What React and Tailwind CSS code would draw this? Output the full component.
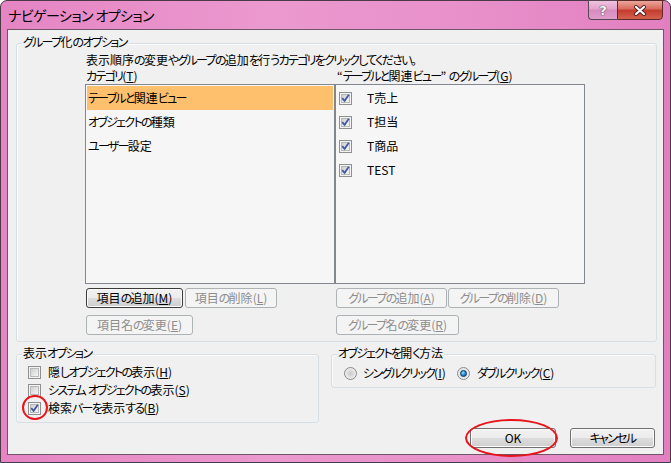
import React from "react";

const F = "font-['Noto_Sans_CJK_JP','Noto_Sans',sans-serif] [font-feature-settings:'palt']";

function J({ t, k }) {
  const parts = t.split(/([\u3040-\u30ff]+)/);
  return (
    <>
      {parts.map((p, i) =>
        /[\u3040-\u30ff]/.test(p) ? (
          <span key={i} className="tracking-[-1.7px]">{p}</span>
        ) : (
          <React.Fragment key={i}>{p}</React.Fragment>
        )
      )}
      {k && (
        <>
          (<u>{k}</u>)
        </>
      )}
    </>
  );
}

function Check({ checked }) {
  return (
    <div className="w-[13px] h-[13px] shrink-0 border border-[#8e8f8f] bg-[#f4f4f4] p-[1px]">
      <div className="relative w-full h-full border border-[#b9b9b9] bg-[linear-gradient(135deg,#cfcfcf,#f6f6f6)]">
        {checked && (
          <svg className="absolute -left-[1px] -top-[1px]" width="9" height="9" viewBox="0 0 9 9">
            <path d="M1.2 4.2 L3.6 6.8 L7.8 0.8" stroke="#3f55a3" strokeWidth="1.7" fill="none" />
          </svg>
        )}
      </div>
    </div>
  );
}

function Radio({ checked }) {
  return (
    <div className="w-[13px] h-[13px] shrink-0 rounded-full border border-[#8b8b8b] bg-[radial-gradient(circle_at_50%_50%,#c9c9c9_0%,#e6e6e6_55%,#f6f6f6_100%)] flex items-center justify-center">
      {checked && (
        <div className="w-[7px] h-[7px] rounded-full border border-[#0c3a66] bg-[radial-gradient(circle_at_40%_35%,#9fe0ff_0%,#1e8ad6_50%,#0b4d8c_100%)]" />
      )}
    </div>
  );
}

function Btn({ children, w, disabled, dark }) {
  if (disabled) {
    return (
      <div
        className={`${w} h-[20px] shrink-0 rounded-[3px] border border-[#adb2b5] bg-[#f4f4f4] flex items-center justify-center whitespace-nowrap text-[12px] leading-[16px] text-[#8d8d8d]`}
      >
        {children}
      </div>
    );
  }
  return (
    <div
      className={`${w} h-[20px] shrink-0 rounded-[3px] border ${dark ? "border-[#3c3c3c]" : "border-[#707070]"} bg-[linear-gradient(to_bottom,#f2f2f2_0%,#ebebeb_50%,#dddddd_50%,#cfcfcf_100%)] shadow-[inset_0_0_0_1px_#fbfbfb] flex items-center justify-center whitespace-nowrap text-[12px] leading-[16px] text-black`}
    >
      {children}
    </div>
  );
}

export default function App() {
  return (
    <div className={`w-[671px] h-[463px] ${F} text-black`}>
      <div className="w-[671px] h-[463px] rounded-t-[7px] border border-[#4a3946] bg-[linear-gradient(to_right,#e585c3,#eb99cf_40%,#e890ca_70%,#e27fc0)] flex flex-col px-[6px] pb-[7px]">
        {/* title bar */}
        <div className="h-[28px] flex items-start justify-between shrink-0">
          <div className="ml-[1px] mt-[5px] text-[14px] leading-[18px] tracking-[-0.6px] text-black whitespace-nowrap">ナビゲーション オプション</div>
          <div className="flex -mt-[1px] mr-[1px]">
            <div className="w-[29px] h-[20px] rounded-bl-[4px] border border-[#5a4555] border-r-0 bg-[linear-gradient(to_bottom,#efc3df_0%,#e3a2cc_45%,#d68ac0_50%,#df9dca_100%)] flex items-center justify-center">
              <span className="font-['DejaVu_Sans',sans-serif] font-bold text-[13px] leading-[13px] text-white [text-shadow:0_0_1px_#333,0_0_1px_#333]">?</span>
            </div>
            <div className="w-[46px] h-[20px] rounded-br-[4px] border border-[#5a2a28] bg-[linear-gradient(to_bottom,#eba79c_0%,#d96a5b_45%,#c43b2c_50%,#d4604e_100%)] flex items-center justify-center">
              <svg width="14" height="11" viewBox="0 0 14 11">
                <path d="M3 2 L11 9 M11 2 L3 9" stroke="#4a2020" strokeWidth="4" strokeLinecap="round" />
                <path d="M3 2 L11 9 M11 2 L3 9" stroke="#ffffff" strokeWidth="2.2" strokeLinecap="round" />
              </svg>
            </div>
          </div>
        </div>

        {/* client */}
        <div className="flex-1 border border-[#6f5566] bg-[#f0f0f0] flex flex-col whitespace-nowrap">
          {/* group 1 */}
          <div className="relative mt-[13px] ml-[8px] w-[641px] rounded-[3px] border border-[#d5dfe5] shadow-[inset_1px_1px_0_#fbfbfb] pl-[68px] pt-[8px] pb-[6px]">
            <div className="absolute -top-[10px] left-[5px] px-[1px] bg-[#f0f0f0] text-[12px] leading-[16px]"><J t="グループ化のオプション" /></div>
            <div className="ml-[1px] text-[12px] leading-[16px]"><J t="表示順序の変更やグループの追加を行うカテゴリをクリックしてください。" /></div>
            <div className="flex text-[12px] leading-[16px]">
              <div className="w-[250px] pl-[1px]"><J t="カテゴリ" k="T" /></div>
              <div className="w-[250px] pl-[2px]"><J t="“テーブルと関連ビュー” のグループ" k="G" /></div>
            </div>
            <div className="flex">
              <div className="w-[250px] h-[200px] border border-[#828790] bg-[#f6f6f6] p-[1px] text-[12px] leading-[16px]">
                <div className="h-[24px] bg-[#ffc06e] flex items-center pl-[1px]"><J t="テーブルと関連ビュー" /></div>
                <div className="h-[24px] flex items-center pl-[1px]"><J t="オブジェクトの種類" /></div>
                <div className="h-[24px] flex items-center pl-[1px]"><J t="ユーザー設定" /></div>
              </div>
              <div className="w-[250px] h-[200px] border border-[#828790] bg-[#f6f6f6] pt-[1px] pl-[3px] text-[12px] leading-[16px]">
                {["T売上", "T担当", "T商品", "TEST"].map((t) => (
                  <div key={t} className="h-[24px] flex items-center">
                    <Check checked />
                    <span className="ml-[15px]">{t}</span>
                  </div>
                ))}
              </div>
            </div>
            <div className="flex mt-[4px]">
              <div className="w-[250px] pl-[1px] flex gap-[2px]">
                <Btn w="w-[97px]" dark><J t="項目の追加" k="M" /></Btn>
                <Btn w="w-[92px]" disabled><J t="項目の削除" k="L" /></Btn>
              </div>
              <div className="w-[250px] pl-[1px] flex gap-[1px]">
                <Btn w="w-[111px]" disabled><J t="グループの追加" k="A" /></Btn>
                <Btn w="w-[111px]" disabled><J t="グループの削除" k="D" /></Btn>
              </div>
            </div>
            <div className="flex mt-[7px]">
              <div className="w-[250px] pl-[1px] flex">
                <Btn w="w-[107px]" disabled><J t="項目名の変更" k="E" /></Btn>
              </div>
              <div className="w-[250px] pl-[1px] flex">
                <Btn w="w-[123px]" disabled><J t="グループ名の変更" k="R" /></Btn>
              </div>
            </div>
          </div>

          {/* groups 2 & 3 */}
          <div className="flex items-start mt-[12px] ml-[8px] gap-[12px]">
            <div className="relative w-[303px] rounded-[3px] border border-[#d5dfe5] shadow-[inset_1px_1px_0_#fbfbfb] pl-[11px] pt-[8px] pb-[5px] text-[12px] leading-[16px]">
              <div className="absolute -top-[10px] left-[5px] px-[1px] bg-[#f0f0f0]"><J t="表示オプション" /></div>
              <div className="h-[18px] flex items-center">
                <Check />
                <span className="ml-[7px]"><J t="隠しオブジェクトの表示" k="H" /></span>
              </div>
              <div className="h-[18px] flex items-center">
                <Check />
                <span className="ml-[7px]"><J t="システム オブジェクトの表示" k="S" /></span>
              </div>
              <div className="h-[18px] flex items-center">
                <div className="relative">
                  <Check checked />
                  <div className="absolute -left-[6px] -top-[7px] w-[26px] h-[25px] rounded-full border-2 border-[#e8141c]" />
                </div>
                <span className="ml-[7px]"><J t="検索バーを表示する" k="B" /></span>
              </div>
            </div>
            <div className="relative w-[325px] rounded-[3px] border border-[#d5dfe5] shadow-[inset_1px_1px_0_#fbfbfb] pl-[12px] pt-[9px] pb-[5px] text-[12px] leading-[16px]">
              <div className="absolute -top-[10px] left-[5px] px-[1px] bg-[#f0f0f0]"><J t="オブジェクトを開く方法" /></div>
              <div className="h-[18px] flex items-center">
                <div className="w-[113px] flex items-center">
                  <Radio />
                  <span className="ml-[6px]"><J t="シングルクリック" k="I" /></span>
                </div>
                <div className="flex items-center">
                  <Radio checked />
                  <span className="ml-[7px]"><J t="ダブルクリック" k="C" /></span>
                </div>
              </div>
            </div>
          </div>

          {/* bottom buttons */}
          <div className="flex justify-end gap-[14px] mt-[5px] pr-[8px]">
            <div className="relative">
              <Btn w="w-[86px]">OK</Btn>
              <div className="absolute -left-[5px] -top-[9px] w-[93px] h-[38px] rounded-[50%] border-2 border-[#e8141c]" />
            </div>
            <Btn w="w-[85px]"><J t="キャンセル" /></Btn>
          </div>
        </div>
      </div>
    </div>
  );
}
